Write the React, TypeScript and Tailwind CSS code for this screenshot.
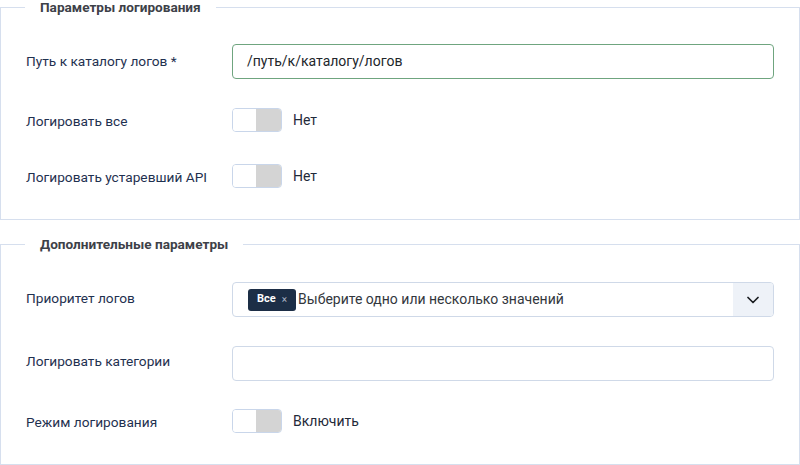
import React from "react";

function Toggle() {
  return (
    <div className="flex h-[24px] w-[50px] overflow-hidden rounded-[4px] border border-[#c9d6ea] bg-white">
      <div className="flex-1 bg-white" />
      <div className="w-[25px] bg-[#d4d4d4]" />
    </div>
  );
}

function Label({ children, className = "" }: { children: React.ReactNode; className?: string }) {
  return (
    <div className={"w-[206px] shrink-0 text-[13.7px] text-[#1f3150] " + className}>{children}</div>
  );
}

export default function App() {
  return (
    <div className="h-[465px] w-[800px] bg-white font-['Roboto',sans-serif]">
      <fieldset className="m-0 border border-[#d6dfee] px-[25px] pb-[31px] pt-[30px]">
        <legend className="ml-[-1px] px-[15px] text-[13.6px] font-bold leading-[14px] text-[#3d4148]">
          Параметры логирования
        </legend>
        <div className="flex items-start">
          <Label className="pt-[7px]">Путь к каталогу логов *</Label>
          <div className="flex h-[35px] w-[542px] items-center rounded-[4px] border border-[#6fa57f] px-[14px] text-[14px] text-[#22262b]">
            /путь/к/каталогу/логов
          </div>
        </div>
        <div className="mt-[29px] flex items-center">
          <Label className="pt-[3px]">Логировать все</Label>
          <Toggle />
          <span className="ml-[11px] text-[14px] text-[#1f2a3a]">Нет</span>
        </div>
        <div className="mt-[32px] flex items-center">
          <Label className="pt-[3px]">Логировать устаревший API</Label>
          <Toggle />
          <span className="ml-[11px] text-[14px] text-[#1f2a3a]">Нет</span>
        </div>
      </fieldset>

      <fieldset className="m-0 mt-[17px] border border-[#d6dfee] px-[25px] pb-[31px] pt-[31px]">
        <legend className="ml-[-1px] px-[15px] text-[13.6px] font-bold leading-[14px] text-[#3d4148]">
          Дополнительные параметры
        </legend>
        <div className="flex items-start">
          <Label className="pt-[6px]">Приоритет логов</Label>
          <div className="flex h-[35px] w-[542px] items-stretch overflow-hidden rounded-[4px] border border-[#cfd9e8]">
            <div className="flex flex-1 items-center pl-[15px]">
              <span className="flex h-[22px] items-center rounded-[3px] bg-[#1c2e46] pl-[9px] pr-[9px] text-[11px] font-bold text-white">
                Все
                <span className="ml-[6px] text-[10px] font-normal text-[#aab4c4]">×</span>
              </span>
              <span className="ml-[2px] text-[14px] text-[#33373d]">Выберите одно или несколько значений</span>
            </div>
            <div className="flex w-[40px] items-center justify-center bg-[#eef2f8]">
              <svg width="12" height="8" viewBox="0 0 12 8" fill="none">
                <path d="M1 1.5 L6 6.5 L11 1.5" stroke="#1a1d21" strokeWidth="1.7" strokeLinecap="round" strokeLinejoin="round" />
              </svg>
            </div>
          </div>
        </div>
        <div className="mt-[29px] flex items-start">
          <Label className="pt-[5px]">Логировать категории</Label>
          <div className="h-[35px] w-[542px] rounded-[4px] border border-[#cfd9e8]" />
        </div>
        <div className="mt-[28px] flex items-center">
          <Label className="pt-[3px]">Режим логирования</Label>
          <Toggle />
          <span className="ml-[11px] text-[14px] text-[#1f2a3a]">Включить</span>
        </div>
      </fieldset>
    </div>
  );
}
